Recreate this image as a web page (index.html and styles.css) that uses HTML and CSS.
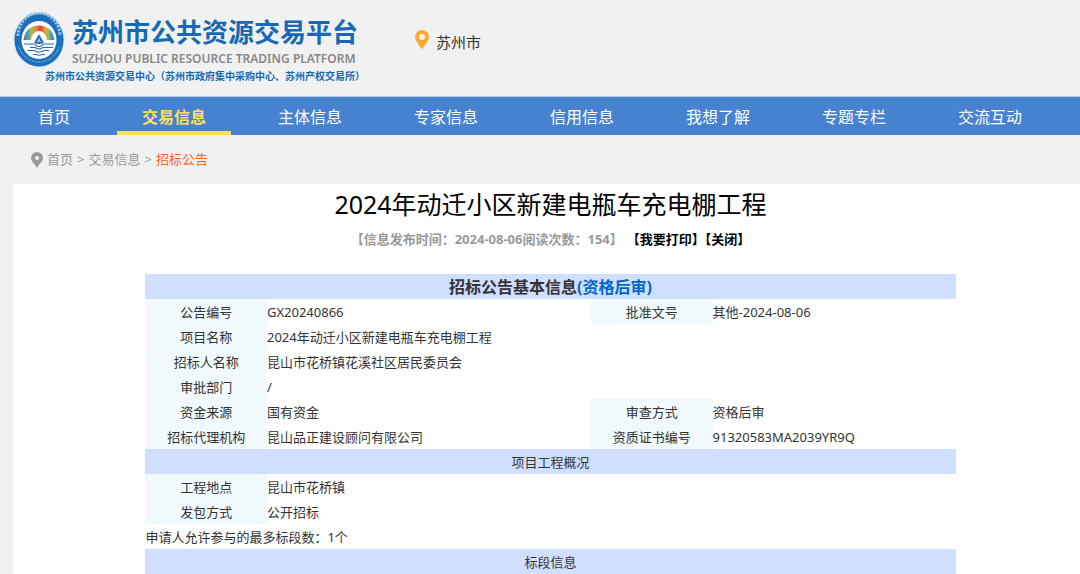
FILE: index.html
```html
<!DOCTYPE html>
<html lang="zh-CN">
<head>
<meta charset="utf-8">
<title>苏州市公共资源交易平台</title>
<link rel="stylesheet" href="styles.css">
</head>
<body>
<header class="header">
  <div class="brand">
    <div class="brand-main">
      <svg class="emblem" viewBox="0 0 52 56" aria-hidden="true">
        <defs>
          <linearGradient id="rainbow" x1="0" x2="1" y1="0" y2="0">
            <stop offset="0" stop-color="#7a62b8"/>
            <stop offset=".14" stop-color="#4c9fb0"/>
            <stop offset=".26" stop-color="#a9bd45"/>
            <stop offset=".4" stop-color="#ef8a3a"/>
            <stop offset=".55" stop-color="#dc4434"/>
            <stop offset=".7" stop-color="#f0a13c"/>
            <stop offset=".8" stop-color="#9fc04c"/>
            <stop offset=".9" stop-color="#3d9ac0"/>
            <stop offset="1" stop-color="#8262b4"/>
          </linearGradient>
        </defs>
        <ellipse cx="26" cy="28" rx="25.5" ry="27.5" fill="#d3e4f4"/>
        <ellipse cx="26" cy="28" rx="24.500" ry="26.500" fill="#1b6ebb"/>
        <path d="M5 24A21 23 0 0 1 47 24" fill="none" stroke="#9dc3e6" stroke-width="3" stroke-dasharray="2.400 1.200"/>
        <path d="M5.500 34A21.500 23 0 0 0 46.500 34" fill="none" stroke="#6ea6d8" stroke-width="1.500" stroke-dasharray="1.300 1"/>
        <ellipse cx="26" cy="28" rx="17.500" ry="19" fill="#fff"/>
        <path d="M10.500 28C12 17 19 13.500 26 13.500S40 17 41.500 28H34C33 21 29 19 26 19S19 21 18 28Z" fill="url(#rainbow)"/>
        <path d="M26 23.500 30 30.500Q26 32 22 30.500Z" fill="#1b6ebb" stroke="#1b6ebb" stroke-width="1.500" stroke-linejoin="round"/>
        <path d="M26 26.500v2m-2 1.500 2-1.500 2 1.500" fill="none" stroke="#fff" stroke-width="1"/>
        <path d="M11 32h9q2 0 3 1.500 3 2 6 0 1-1.500 3-1.500h9M17 35.500h4q2 0 3 1 2 1 4 0 1-1 3-1h9M14 38.500h6q2 0 3 1 3 1.500 6 0 1-1 3-1h4M20 42.500h3q3 1.500 6 0h3" fill="none" stroke="#1b6ebb" stroke-width="1.100"/>
      </svg>
      <div class="brand-text">
        <div class="brand-name">苏州市公共资源交易平台</div>
        <div class="brand-en">SUZHOU PUBLIC RESOURCE TRADING PLATFORM</div>
      </div>
    </div>
    <div class="brand-sub">苏州市公共资源交易中心（苏州市政府集中采购中心、苏州产权交易所）</div>
  </div>
  <div class="city">
    <svg class="city-pin" viewBox="0 0 14 20" aria-hidden="true"><path fill="#ffa82b" fill-rule="evenodd" d="M7 0a7 7 0 0 1 7 7c0 4-4.500 7.500-7 12.500C4.500 14.500 0 11 0 7a7 7 0 0 1 7-7Zm0 4a3 3 0 1 0 0 6 3 3 0 0 0 0-6Z"/></svg>
    <span>苏州市</span>
  </div>
</header>
<nav class="nav">
  <a class="nav-link" href="#">首页</a>
  <a class="nav-link active" href="#">交易信息</a>
  <a class="nav-link" href="#">主体信息</a>
  <a class="nav-link" href="#">专家信息</a>
  <a class="nav-link" href="#">信用信息</a>
  <a class="nav-link" href="#">我想了解</a>
  <a class="nav-link" href="#">专题专栏</a>
  <a class="nav-link" href="#">交流互动</a>
</nav>
<div class="crumbs">
  <svg class="crumb-pin" viewBox="0 0 12 16" aria-hidden="true"><path fill="#999" fill-rule="evenodd" d="M6 0a6 6 0 0 1 6 6c0 3.500-4 6-6 10C4 12 0 9.500 0 6a6 6 0 0 1 6-6Zm0 4a2 2 0 1 0 0 4 2 2 0 0 0 0-4Z"/></svg>
  <a href="#">首页</a><span>&gt;</span><a href="#">交易信息</a><span>&gt;</span><a class="current" href="#">招标公告</a>
</div>
<main class="panel">
  <h1 class="title">2024年动迁小区新建电瓶车充电棚工程</h1>
  <div class="meta"><span>【信息发布时间：2024-08-06阅读次数：154】</span><span class="actions"><a href="#">【我要打印】</a><a href="#">【关闭】</a></span></div>
  <table class="info">
    <colgroup><col class="c-label"><col class="c-wide"><col class="c-label"><col class="c-value"></colgroup>
    <tbody>
      <tr><th class="band main-band" colspan="4">招标公告基本信息<span class="blue">(资格后审)</span></th></tr>
      <tr><th>公告编号</th><td>GX20240866</td><th>批准文号</th><td>其他-2024-08-06</td></tr>
      <tr><th>项目名称</th><td colspan="3">2024年动迁小区新建电瓶车充电棚工程</td></tr>
      <tr><th>招标人名称</th><td colspan="3">昆山市花桥镇花溪社区居民委员会</td></tr>
      <tr><th>审批部门</th><td colspan="3">/</td></tr>
      <tr><th>资金来源</th><td>国有资金</td><th>审查方式</th><td>资格后审</td></tr>
      <tr><th>招标代理机构</th><td>昆山品正建设顾问有限公司</td><th>资质证书编号</th><td>91320583MA2039YR9Q</td></tr>
      <tr><th class="band" colspan="4">项目工程概况</th></tr>
      <tr><th>工程地点</th><td colspan="3">昆山市花桥镇</td></tr>
      <tr><th>发包方式</th><td colspan="3">公开招标</td></tr>
      <tr><td colspan="4">申请人允许参与的最多标段数：1个</td></tr>
      <tr><th class="band" colspan="4">标段信息</th></tr>
    </tbody>
  </table>
</main>
</body>
</html>
```
FILE: styles.css
```css
* { box-sizing: border-box; }
body {
  margin: 0;
  background: #f1f1f1;
  color: #333;
  font: 13px/25px "Noto Sans", "Noto Sans CJK SC", sans-serif;
}
a { color: inherit; text-decoration: none; }
svg { display: block; flex: none; }

.header {
  display: flex;
  align-items: flex-start;
  gap: 50px;
  height: 97px;
  padding: 12px 13px 0;
  border-bottom: 1px solid #b5cbe9;
}
.brand { color: #1669b5; white-space: nowrap; }
.brand-main { display: flex; gap: 7px; }
.emblem { width: 52px; height: 56px; }
.brand-name { font-size: 26px; line-height: 40px; font-weight: 700; }
.brand-en { color: #888; font-size: 12px; line-height: 14px; font-weight: 600; }
.brand-sub { padding-left: 32px; font-size: 10px; line-height: 16px; font-weight: 700; }
.city { display: flex; gap: 7px; padding-top: 18px; font-size: 15px; }
.city-pin { width: 14px; height: 20px; }

.nav {
  display: flex;
  gap: 22px;
  height: 38px;
  padding: 0 13px;
  background: #4682cf;
}
.nav-link {
  padding: 0 25px;
  color: #fff;
  font-size: 16px;
  line-height: 40px;
  white-space: nowrap;
}
.nav-link.active { color: #ffdf55; font-weight: 700; box-shadow: inset 0 -4px #ffdf55; }

.crumbs {
  display: flex;
  align-items: center;
  gap: 4px;
  height: 49px;
  padding-left: 31px;
  color: #999;
}
.crumb-pin { width: 12px; height: 16px; }
.crumbs .current { color: #ff6418; }

.panel { margin-left: 13px; padding-left: 8px; background: #fff; }
.title {
  margin: 0;
  color: #000;
  font-size: 25px;
  line-height: 40px;
  font-weight: 400;
  text-align: center;
}
.meta {
  display: flex;
  justify-content: center;
  gap: 4px;
  padding-bottom: 20px;
  color: #999;
  line-height: 30px;
  font-weight: 700;
}
.actions { color: #000; }

.info {
  width: 76.5%;
  margin: 0 auto;
  border-collapse: collapse;
  table-layout: fixed;
}
.c-label { width: 15%; }
.c-wide { width: 40%; }
.c-value { width: 30%; }
.info th, .info td { height: 25px; padding: 2px 0 0; line-height: 23px; }
.info th { background: #f0f9fb; font-weight: 400; }
.info .band { background: #d0deff; }
.info .main-band { font-size: 16px; font-weight: 700; }
.blue { color: #0066cc; }
```
